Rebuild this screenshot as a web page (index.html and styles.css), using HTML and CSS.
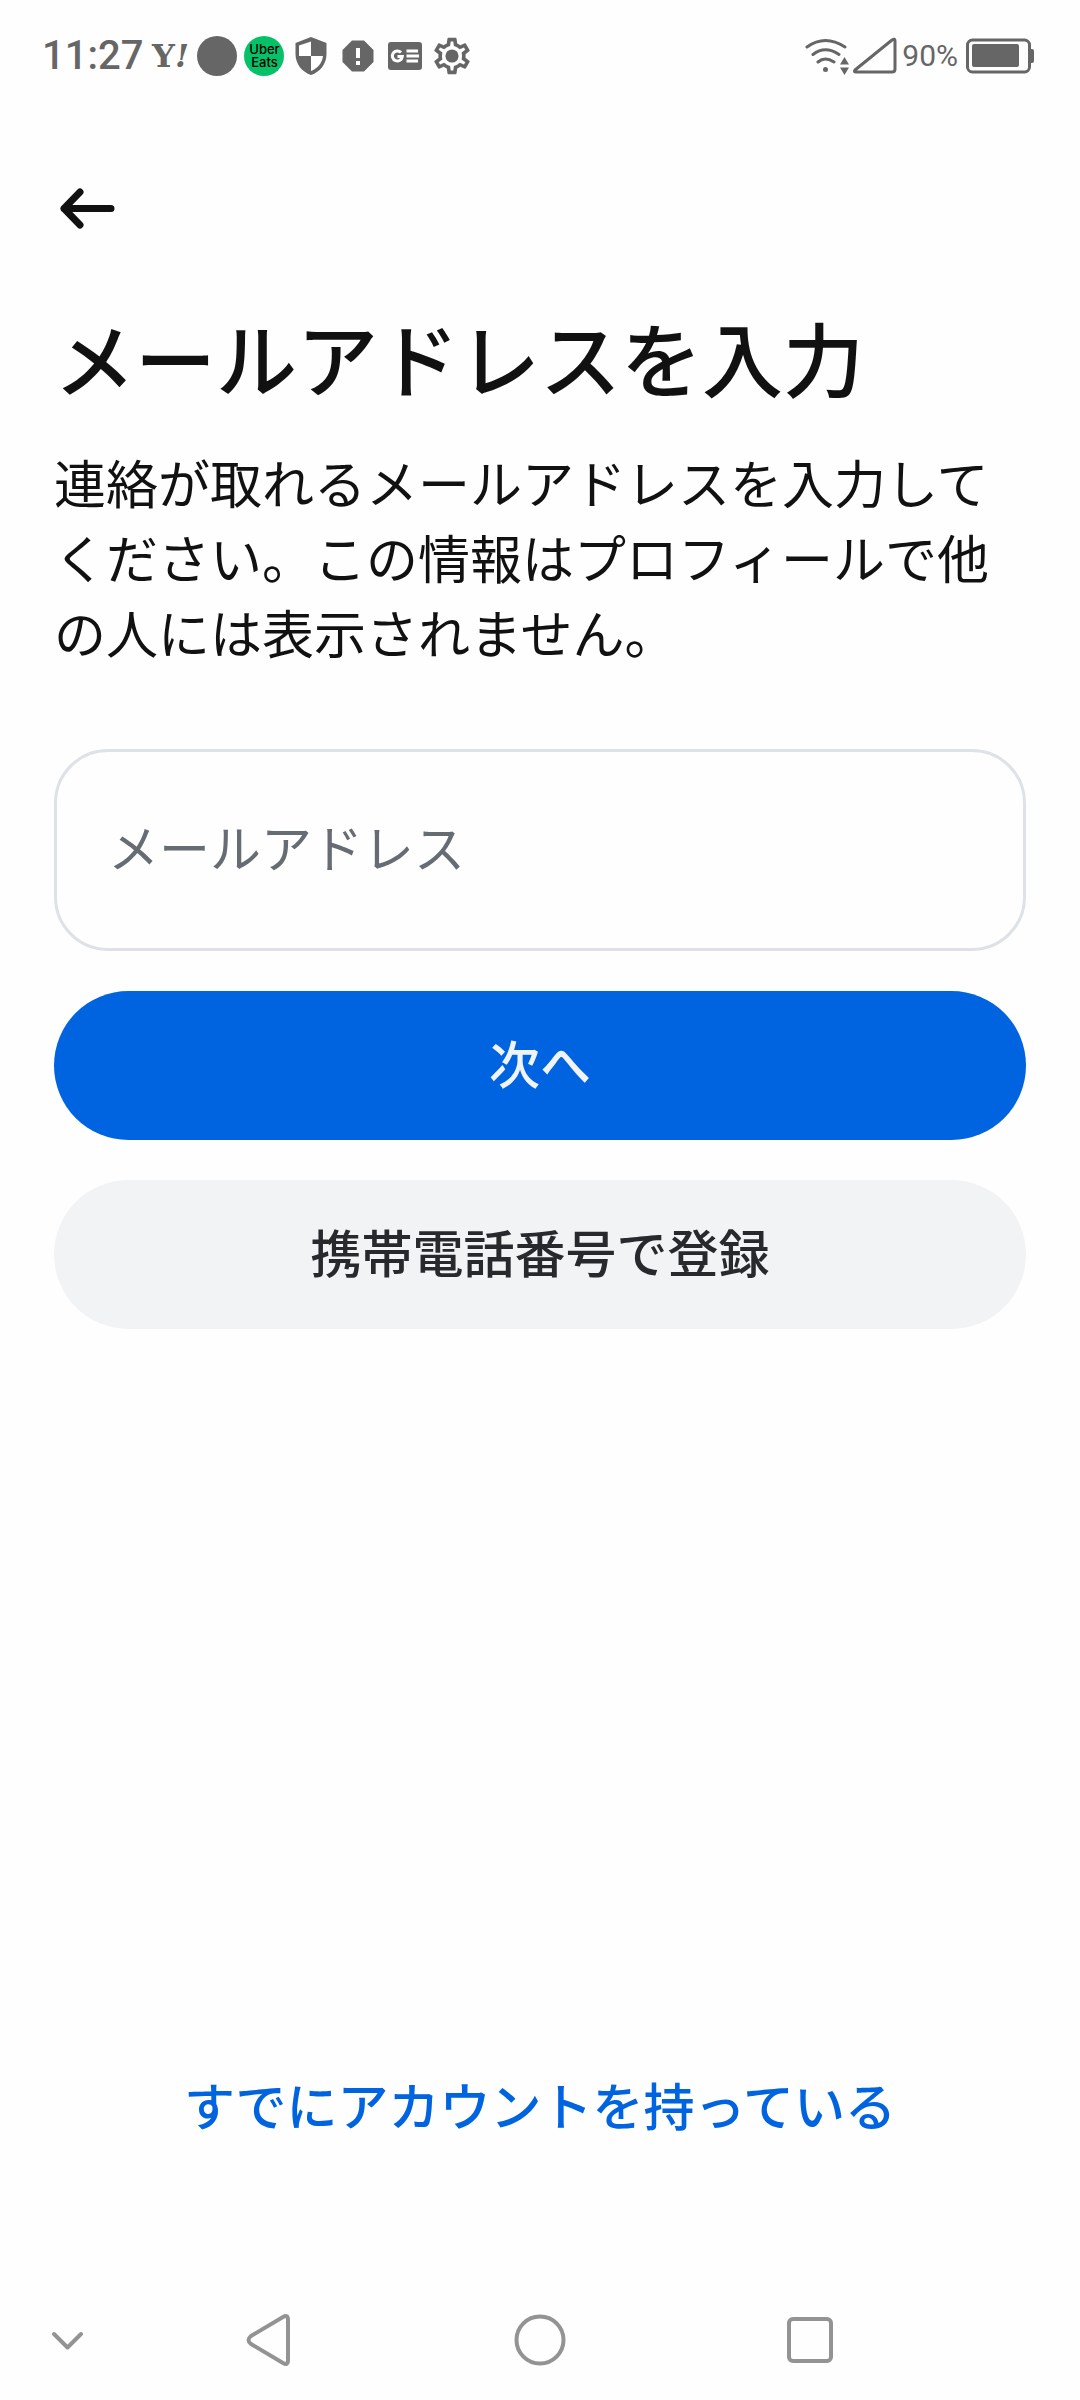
FILE: index.html
```html
<!DOCTYPE html>
<html lang="ja">
<head>
  <meta charset="UTF-8">
  <meta name="viewport" content="width=device-width, initial-scale=1">
  <title>メールアドレスを入力</title>
  <link rel="stylesheet" href="styles.css">
</head>
<body>
  <div class="status-bar">
    <div class="status-left">
      <span class="clock">11:27</span>
      <span class="yahoo">Y<i>!</i></span>
      <span class="dot"></span>
      <span class="uber">Uber<br>Eats</span>
      <!-- shield -->
      <svg class="icon" viewBox="0 0 40 40">
        <path fill="#666" fill-rule="evenodd" d="M20 1 35.500 7V18C35.500 28 29 36 20 39 11 36 4.500 28 4.500 18V7ZM20 5.500V20H32C31.200 27 26.500 32.500 20 35V20H8V9.500Z"/>
      </svg>
      <!-- alert -->
      <svg class="icon" viewBox="0 0 40 40">
        <path fill="#666" d="M14 4.500H26L35.500 14V26L26 35.500H14L4.500 26V14Z"/>
        <path fill="#fff" d="M18 12H22V22H18ZM18 25H22V29H18Z"/>
      </svg>
      <!-- news -->
      <svg class="icon" viewBox="0 0 40 40">
        <rect x="3" y="6" width="34" height="28" rx="3" fill="#666"/>
        <path fill="none" stroke="#fff" stroke-width="3" d="M16 16.500A5 5 0 1 0 17.300 20.500H12.500M21.500 15H33M21.500 20H34M21.500 25H33"/>
      </svg>
      <!-- settings -->
      <svg class="icon" viewBox="1 1 22 22">
        <path fill="#666" fill-rule="evenodd" d="M19.430 12.980c.040-.320.070-.640.070-.980s-.030-.660-.070-.980l2.110-1.650c.190-.150.240-.420.120-.640l-2-3.460c-.120-.220-.390-.300-.610-.220l-2.490 1c-.520-.400-1.080-.730-1.690-.980l-.380-2.650C14.460 2.180 14.250 2 14 2h-4c-.250 0-.460.180-.490.420l-.380 2.650c-.610.250-1.170.590-1.690.980l-2.490-1c-.230-.090-.490 0-.610.220l-2 3.460c-.130.220-.070.490.120.640l2.110 1.650c-.040.320-.070.650-.070.980s.030.660.070.980l-2.110 1.650c-.190.150-.240.420-.120.640l2 3.460c.120.220.390.300.610.220l2.490-1c.520.400 1.080.730 1.690.980l.380 2.650c.030.240.240.420.490.420h4c.250 0 .460-.180.490-.420l.380-2.650c.610-.250 1.170-.590 1.690-.980l2.490 1c.230.090.490 0 .610-.220l2-3.460c.120-.220.070-.490-.120-.640zM17.450 11.270c.040.310.050.520.050.730s-.020.430-.050.730l-.140 1.130.890.700 1.080.840-.700 1.210-1.270-.510-1.040-.420-.900.680c-.430.320-.840.560-1.250.730l-1.060.430-.160 1.130-.200 1.350h-1.400l-.350-2.480-1.060-.430c-.430-.180-.830-.410-1.230-.710l-.910-.700-1.060.430-1.270.510-.700-1.210 1.970-1.540-.140-1.130c-.030-.310-.050-.540-.050-.740s.020-.430.050-.730l.140-1.130-1.970-1.540.700-1.210 1.270.510 1.040.420.900-.680c.430-.320.840-.560 1.250-.730l1.060-.430.360-2.480h1.390l.350 2.480 1.060.430c.430.180.830.410 1.230.710l.910.700 1.060-.430 1.270-.510.700 1.210-1.960 1.540z"/>
        <circle cx="12" cy="12" r="3.600" fill="#666"/>
      </svg>
    </div>
    <div class="status-right">
      <svg class="wifi" viewBox="0 0 48 40">
        <g fill="none" stroke="#666" stroke-width="3" stroke-linecap="round">
          <path d="M3 11Q21-2 41 11M9 18.500Q21 9 35 18.500M14 26Q21 20 30 26"/>
        </g>
        <circle cx="21.500" cy="33.500" r="2.500" fill="#666"/>
        <path fill="#666" d="M36 28.500 40.500 21 45 28.500ZM36 31.500 40.500 39 45 31.500Z"/>
      </svg>
      <svg class="signal" viewBox="0 0 46 40">
        <path fill="none" stroke="#666" stroke-width="3" stroke-linejoin="round" d="M3 34 40 4Q43 2 43 5V33Q43 36 40 36H4Q1.500 36 3 34Z"/>
      </svg>
      <span class="percent">90%</span>
      <svg class="battery" viewBox="0 0 68 40">
        <rect x="1.500" y="4" width="62" height="32" rx="5" fill="none" stroke="#666" stroke-width="3"/>
        <rect x="6" y="8" width="47" height="23" rx="2" fill="#666"/>
        <path fill="#666" d="M64 13H66Q68 13 68 15V25Q68 27 66 27H64Z"/>
      </svg>
    </div>
  </div>

  <main class="content">
    <button class="back" type="button" aria-label="戻る">
      <svg viewBox="0 0 72 72">
        <path fill="none" stroke="#111" stroke-width="7" stroke-linecap="round" stroke-linejoin="round" d="M57 36.500H10M26 20 10 36.500 26 53"/>
      </svg>
    </button>
    <h1>メールアドレスを入力</h1>
    <p>連絡が取れるメールアドレスを入力してください。この情報はプロフィールで他の人には表示されません。</p>
    <form class="form">
      <input type="email" placeholder="メールアドレス" aria-label="メールアドレス">
      <button class="btn btn-primary" type="button">次へ</button>
      <button class="btn btn-secondary" type="button">携帯電話番号で登録</button>
    </form>
    <a class="login" href="#">すでにアカウントを持っている</a>
  </main>

  <nav class="nav-bar">
    <button type="button" aria-label="閉じる">
      <svg viewBox="0 0 60 60"><path d="M16 24 29.500 37.500 43 24"/></svg>
    </button>
    <button type="button" aria-label="前へ">
      <svg viewBox="0 0 60 60"><path d="M43 7Q48 4 48 10V50Q48 56 43 53L11 34Q6 30 11 26Z"/></svg>
    </button>
    <button type="button" aria-label="ホーム">
      <svg viewBox="0 0 60 60"><circle cx="30" cy="30" r="23.500"/></svg>
    </button>
    <button type="button" aria-label="履歴">
      <svg viewBox="0 0 60 60"><rect x="9" y="9" width="42" height="42" rx="4"/></svg>
    </button>
  </nav>
</body>
</html>
```

FILE: styles.css
```css
* {
  box-sizing: border-box;
}
body {
  display: flex;
  flex-direction: column;
  min-height: 100vh;
  margin: 0;
  background-color: #fefefe;
  color: #111;
  font-family: "Noto Sans CJK JP", sans-serif;
}
button {
  border: none;
  padding: 0;
  background: none;
  font-family: inherit;
  cursor: pointer;
}
svg {
  display: block;
}

/* status bar */
.status-bar {
  display: flex;
  justify-content: space-between;
  align-items: center;
  height: 112px;
  padding: 0 46px 0 42px;
  color: #666;
  font-family: Roboto, sans-serif;
}
.status-left {
  display: flex;
  align-items: center;
  gap: 7px;
}
.status-right {
  display: flex;
  align-items: center;
}
.clock {
  font-size: 40px;
  font-weight: 500;
  line-height: 48px;
}
.yahoo {
  width: 40px;
  font-family: "DejaVu Serif", serif;
  font-size: 32px;
  font-weight: bold;
  line-height: 40px;
  text-align: center;
}
.dot {
  width: 40px;
  height: 40px;
  border-radius: 50%;
  background-color: #666;
}
.uber {
  width: 40px;
  height: 40px;
  padding-top: 7px;
  border-radius: 50%;
  background-color: #06c167;
  color: #000;
  font-family: Inter, sans-serif;
  font-size: 13px;
  font-weight: 500;
  line-height: 13px;
  text-align: center;
}
.icon {
  width: 40px;
  height: 40px;
}
.wifi {
  width: 48px;
  height: 40px;
}
.signal {
  width: 46px;
  height: 40px;
}
.percent {
  margin: 0 8px 0 4px;
  font-size: 30px;
  line-height: 40px;
}
.battery {
  width: 68px;
  height: 40px;
}

/* page */
.content {
  display: flex;
  flex: 1;
  flex-direction: column;
  padding: 60px 54px 101px;
}
.back {
  align-self: flex-start;
}
.back svg {
  width: 72px;
  height: 72px;
}
h1 {
  margin: 61px 0 37px;
  font-size: 81px;
  font-weight: 500;
  line-height: 102px;
}
p {
  margin: 0 0 80px;
  font-size: 52px;
  line-height: 75px;
}
.form {
  display: flex;
  flex-direction: column;
  gap: 40px;
}
.form input {
  width: 100%;
  height: 202px;
  padding: 0 51px 8px;
  border: 3px solid #dee2e6;
  border-radius: 54px;
  background: none;
  color: #111;
  font-family: inherit;
  font-size: 51px;
}
.form input::placeholder {
  color: #676b74;
  opacity: 1;
}
.btn {
  height: 149px;
  padding-bottom: 8px;
  border-radius: 75px;
  font-size: 51px;
  font-weight: 500;
}
.btn-primary {
  background-color: #0064e0;
  color: #f1f4f7;
}
.btn-secondary {
  background-color: #f1f3f5;
  color: #27292c;
}
.login {
  margin-top: auto;
  color: #0064e0;
  font-size: 51px;
  font-weight: 500;
  line-height: 149px;
  text-align: center;
  text-decoration: none;
}

/* navigation bar */
.nav-bar {
  display: grid;
  grid-template-columns: 1fr 2fr 2fr 2fr 1fr;
  align-items: center;
  justify-items: center;
  height: 120px;
}
.nav-bar svg {
  width: 60px;
  height: 60px;
  fill: none;
  stroke: #939393;
  stroke-width: 4px;
  stroke-linecap: round;
  stroke-linejoin: round;
}
```
